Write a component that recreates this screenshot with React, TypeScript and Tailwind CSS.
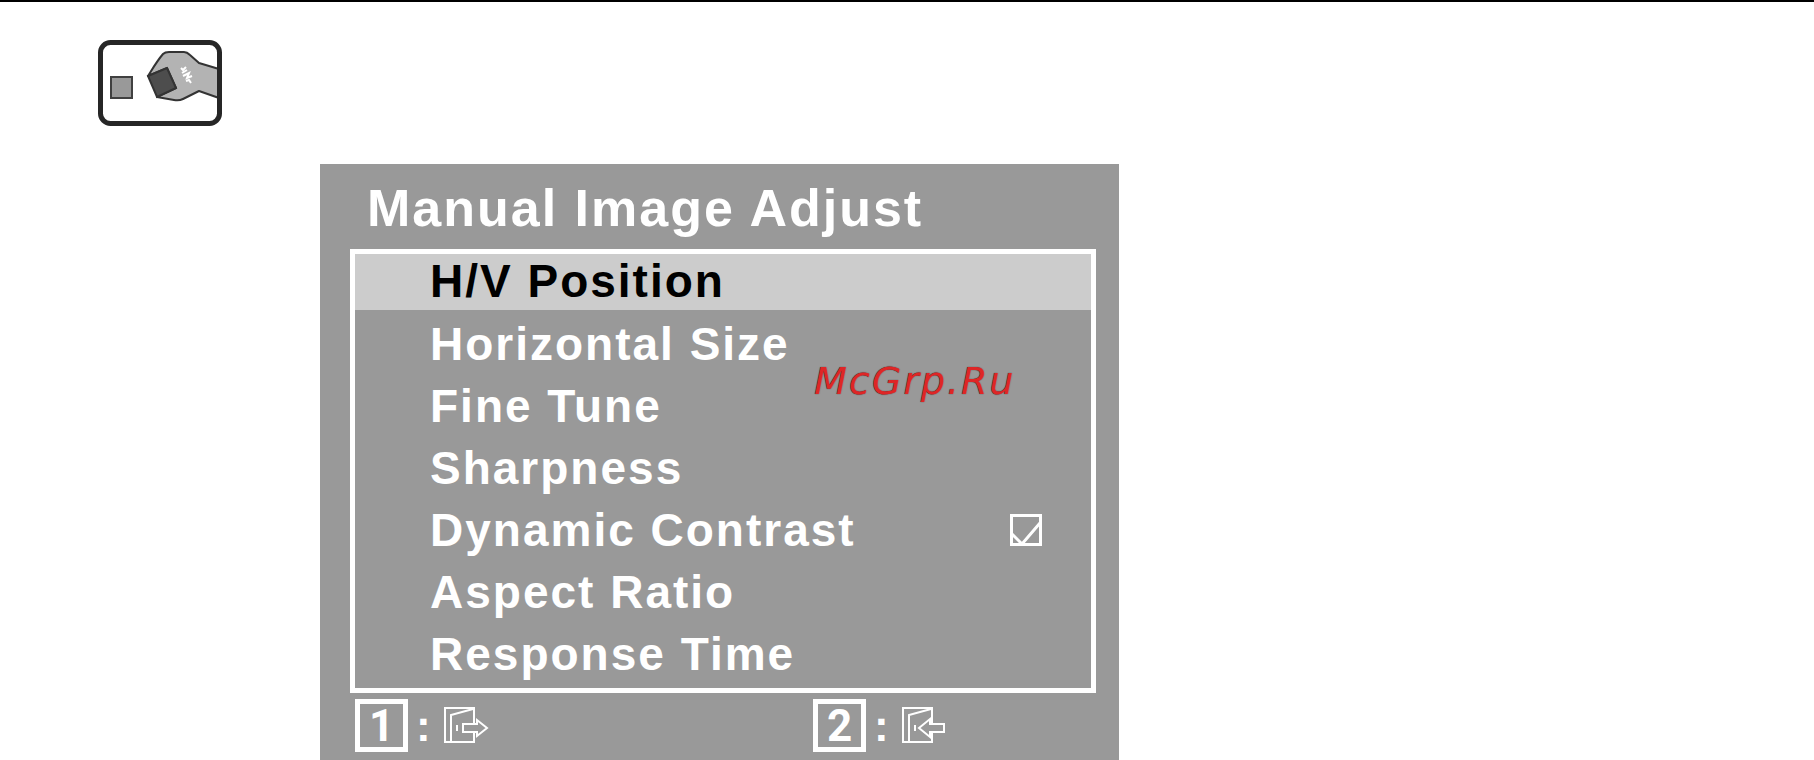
import React from 'react';

interface MenuItem {
    label: string;
    checked?: boolean;
}

const items: MenuItem[] = [
    { label: 'Horizontal Size' },
    { label: 'Fine Tune' },
    { label: 'Sharpness' },
    { label: 'Dynamic Contrast', checked: true },
    { label: 'Aspect Ratio' },
    { label: 'Response Time' },
];

const WrenchIcon: React.FC = () => (
    <svg width="124" height="86" viewBox="0 0 124 86" fill="none" role="img" aria-label="Manual image adjust">
        <path
            d="M50 36 C55 28 59 21 65 14 Q67 12 71 12 H86 Q89 12 92 15 L101 23 L121 29 V58 L101 51 L85 59 Q81 61 76 60 L59 57 L78 48 L69 28 Z"
            fill="#b3b3b3"
            stroke="#333"
            strokeWidth="2"
            strokeLinejoin="round"
        />
        <path d="M50 36 L69 28 L78 48 L59 57 Z" fill="#4d4d4d" stroke="#333" strokeWidth="2" />
        <path
            d="M83 28 l2 2 l3 -3 M84 33 l5 -3 M85 36 l6 -3 l-2 5 l5 -2 M88 41 l3 -1 l2 3"
            stroke="#fff"
            strokeWidth="2"
        />
        <rect x="13" y="37" width="21" height="21" fill="#999" stroke="#404040" strokeWidth="2" />
        <rect x="2.5" y="2.5" width="119" height="81" rx="10" stroke="#262626" strokeWidth="5" />
    </svg>
);

const DoorIcon: React.FC<{ exit?: boolean }> = ({ exit }) => (
    <svg width="46" height="37" viewBox="0 0 46 37" fill="none" stroke="#fff" strokeWidth="2">
        <path d="M2 1 H31 V35 H2 Z" />
        <path d="M8 35 V8 L30 2" />
        <path d="M14 18 V24" />
        {exit ? (
            <path d="M20 17 H34 V13 L44 21 L34 29 V25 H20 Z" fill="#999" />
        ) : (
            <path d="M43 17 H29 V12 L18 21 L29 30 V25 H43 Z" fill="#999" />
        )}
    </svg>
);

const KeyHint: React.FC<{ digit: string; exit?: boolean }> = ({ digit, exit }) => (
    <button className="flex items-center text-left" aria-label={exit ? 'Exit' : 'Enter'}>
        <span className="flex h-[53px] w-[53px] items-center justify-center border-[5px] border-white font-[Roboto,sans-serif] text-[44px] leading-none">
            {digit}
        </span>
        <span className="w-[35px] pl-2 text-[44px] leading-[52px]">:</span>
        <DoorIcon exit={exit} />
    </button>
);

export default function App() {
    return (
        <div className="w-full border-t-2 border-black bg-white font-['Liberation_Sans',Arial,sans-serif]">
            <div className="pt-[38px] pl-[98px]">
                <WrenchIcon />
            </div>

            {/* On-screen menu */}
            <main className="relative mt-[38px] ml-[320px] max-w-[799px] bg-[#999] pr-[23px] pb-2 pl-[30px] font-bold text-white">
                <h1 className="pt-[3px] pl-[17px] text-[52px] leading-[82px] tracking-[2px]">Manual Image Adjust</h1>

                <div className="border-[5px] border-white pb-[3px] text-[46px] tracking-[2px]">
                    <button className="block w-full bg-[#ccc] pb-0.5 pl-[75px] text-left leading-[54px] text-black">
                        H/V Position
                    </button>
                    <ul className="pt-[3px]">
                        {items.map((item) => (
                            <li key={item.label} className="pr-[49px] pl-[75px] leading-[62px]">
                                {item.checked ? (
                                    <label className="flex items-center justify-between">
                                        {item.label}
                                        <span className="relative block size-8">
                                            <input
                                                type="checkbox"
                                                defaultChecked
                                                className="peer block size-8 appearance-none border-3 border-white"
                                            />
                                            <svg
                                                className="pointer-events-none absolute inset-0 hidden peer-checked:block"
                                                viewBox="0 0 32 32"
                                                fill="none"
                                            >
                                                <path d="M2 20 L12 30 L30 9" stroke="#fff" strokeWidth="3" />
                                            </svg>
                                        </span>
                                    </label>
                                ) : (
                                    <button className="block w-full text-left">{item.label}</button>
                                )}
                            </li>
                        ))}
                    </ul>
                </div>

                <div className="grid grid-cols-[458px_1fr] pt-1.5 pl-[5px]">
                    <KeyHint digit="1" exit />
                    <KeyHint digit="2" />
                </div>

                {/* Watermark */}
                <span className="pointer-events-none absolute top-[193px] left-[494px] font-['DejaVu_Sans',sans-serif] text-[38px] leading-[48px] font-normal tracking-[2px] text-[#de2626] italic text-shadow-[0_0_1px_#222]">
                    McGrp.Ru
                </span>
            </main>
        </div>
    );
}
